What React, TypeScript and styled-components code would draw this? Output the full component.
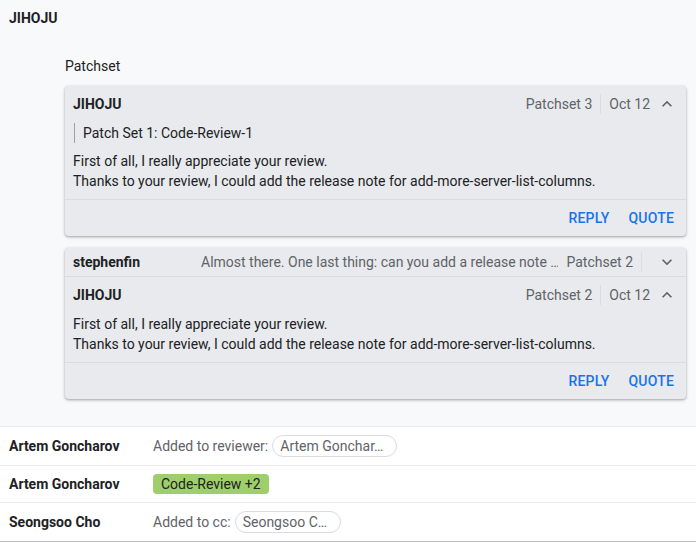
import React, { FC } from 'react';
import styled, { createGlobalStyle } from 'styled-components';

const GlobalStyle = createGlobalStyle`
	body {
		margin: 0;
		background: #f8f9fa;
		font-family: Roboto, 'Liberation Sans', sans-serif;
		font-size: 14px;
		line-height: 20px;
		color: #202124;
	}
`;

interface IComment {
	author: string;
	patchset: string;
	date: string;
	quote?: string;
	lines: string[];
}

const Chevron: FC<{ up?: boolean }> = ({ up }) => (
	<ChevronIcon viewBox="0 0 24 24" width="20" height="20">
		{up ? (
			<path d="M12 8l-6 6 1.41 1.41L12 10.83l4.59 4.58L18 14z" />
		) : (
			<path d="M16.59 8.59L12 13.17 7.41 8.59 6 10l6 6 6-6z" />
		)}
	</ChevronIcon>
);

const CommentBody: FC<{ comment: IComment }> = ({ comment }) => (
	<>
		<CardHeader>
			<Author>{comment.author}</Author>
			<Meta>{comment.patchset}</Meta>
			<Separator />
			<Meta>{comment.date}</Meta>
			<Chevron up />
		</CardHeader>
		<CardBody>
			{comment.quote && <Quote>{comment.quote}</Quote>}
			<Text>
				{comment.lines.map((line, index) => (
					<div key={index}>{line}</div>
				))}
			</Text>
		</CardBody>
		<Actions>
			<ActionButton>Reply</ActionButton>
			<ActionButton>Quote</ActionButton>
		</Actions>
	</>
);

const lines = [
	'First of all, I really appreciate your review.',
	'Thanks to your review, I could add the release note for add-more-server-list-columns.',
];

const App: FC = () => {
	return (
		<>
			<GlobalStyle />
			<Message>
				<MessageAuthor>JIHOJU</MessageAuthor>
				<Thread>
					<ThreadTitle>Patchset</ThreadTitle>
					<Card>
						<CommentBody
							comment={{
								author: 'JIHOJU',
								patchset: 'Patchset 3',
								date: 'Oct 12',
								quote: 'Patch Set 1: Code-Review-1',
								lines,
							}}
						/>
					</Card>
					<Card>
						<CollapsedRow>
							<CollapsedAuthor>stephenfin</CollapsedAuthor>
							<Summary>Almost there. One last thing: can you add a release note …</Summary>
							<Meta>Patchset 2</Meta>
							<Separator />
							<Chevron />
						</CollapsedRow>
						<CommentBody
							comment={{
								author: 'JIHOJU',
								patchset: 'Patchset 2',
								date: 'Oct 12',
								lines,
							}}
						/>
					</Card>
				</Thread>
			</Message>
			<EventList>
				<EventRow>
					<EventName>Artem Goncharov</EventName>
					<EventText>Added to reviewer:</EventText>
					<AccountChip>Artem Gonchar…</AccountChip>
				</EventRow>
				<EventRow>
					<EventName>Artem Goncharov</EventName>
					<VoteChip>Code-Review +2</VoteChip>
				</EventRow>
				<EventRow $last>
					<EventName>Seongsoo Cho</EventName>
					<EventText>Added to cc:</EventText>
					<AccountChip>Seongsoo C…</AccountChip>
				</EventRow>
			</EventList>
		</>
	);
};

export default App;

const Message = styled.section`
	padding: 8px 10px 27px 9px;
`;

const MessageAuthor = styled.div`
	font-weight: 700;
`;

const Thread = styled.div`
	padding-left: 56px;
	padding-top: 28px;
	display: flex;
	flex-direction: column;
	gap: 12px;
`;

const ThreadTitle = styled.div`
	margin-bottom: -2px;
`;

const Card = styled.div`
	background: #e8eaed;
	border-radius: 4px;
	box-shadow: 0 1px 2px rgba(60, 64, 67, 0.3), 0 1px 3px 1px rgba(60, 64, 67, 0.15);
	overflow: hidden;
`;

const CardHeader = styled.div`
	display: flex;
	align-items: center;
	padding: 8px 9px 0 8px;
`;

const Author = styled.div`
	font-weight: 700;
	flex: 1;
`;

const Meta = styled.div`
	color: #5f6368;
	white-space: nowrap;
`;

const Separator = styled.div`
	width: 1px;
	height: 20px;
	background: #dadce0;
	margin: 0 8px;
`;

const ChevronIcon = styled.svg`
	fill: #5f6368;
	margin-left: 7px;
	flex-shrink: 0;
`;

const CardBody = styled.div`
	padding: 9px 8px 8px 8px;
	display: flex;
	flex-direction: column;
	gap: 8px;
	border-bottom: 1px solid #dadce0;
`;

const Quote = styled.div`
	border-left: 1px solid #9aa0a6;
	padding-left: 8px;
	margin-left: 1px;
`;

const Text = styled.div``;

const Actions = styled.div`
	display: flex;
	justify-content: flex-end;
	align-items: center;
	gap: 19px;
	height: 36px;
	padding-right: 12px;
`;

const ActionButton = styled.button`
	background: none;
	border: none;
	padding: 0;
	font-family: inherit;
	font-size: 14px;
	font-weight: 500;
	color: #1a73e8;
	text-transform: uppercase;
	letter-spacing: 0.2px;
	cursor: pointer;
`;

const CollapsedRow = styled.div`
	display: flex;
	align-items: center;
	padding: 4px 9px 4px 8px;
	border-bottom: 1px solid #dadce0;
`;

const CollapsedAuthor = styled.div`
	font-weight: 700;
	width: 128px;
	flex-shrink: 0;
`;

const Summary = styled.div`
	flex: 1;
	min-width: 0;
	color: #5f6368;
	white-space: nowrap;
	overflow: hidden;
	margin-right: 8px;
`;

const EventList = styled.div`
	background: #fff;
`;

const EventRow = styled.div<{ $last?: boolean }>`
	display: flex;
	align-items: center;
	padding: 8px 0 8px 9px;
	border-top: 1px solid #e8eaed;
	border-bottom: ${({ $last }) => ($last ? '1px solid #bdc1c6' : 'none')};
`;

const EventName = styled.div`
	font-weight: 700;
	width: 144px;
	flex-shrink: 0;
`;

const EventText = styled.div`
	color: #5f6368;
	margin-right: 4px;
`;

const AccountChip = styled.div`
	border: 1px solid #dadce0;
	border-radius: 11px;
	height: 20px;
	padding: 0 13px 0 7px;
	color: #5f6368;
	white-space: nowrap;
	background: #fff;
`;

const VoteChip = styled.div`
	background: #9fcf6b;
	border-radius: 4px;
	padding: 0 8px;
	height: 20px;
	color: #202124;
`;
